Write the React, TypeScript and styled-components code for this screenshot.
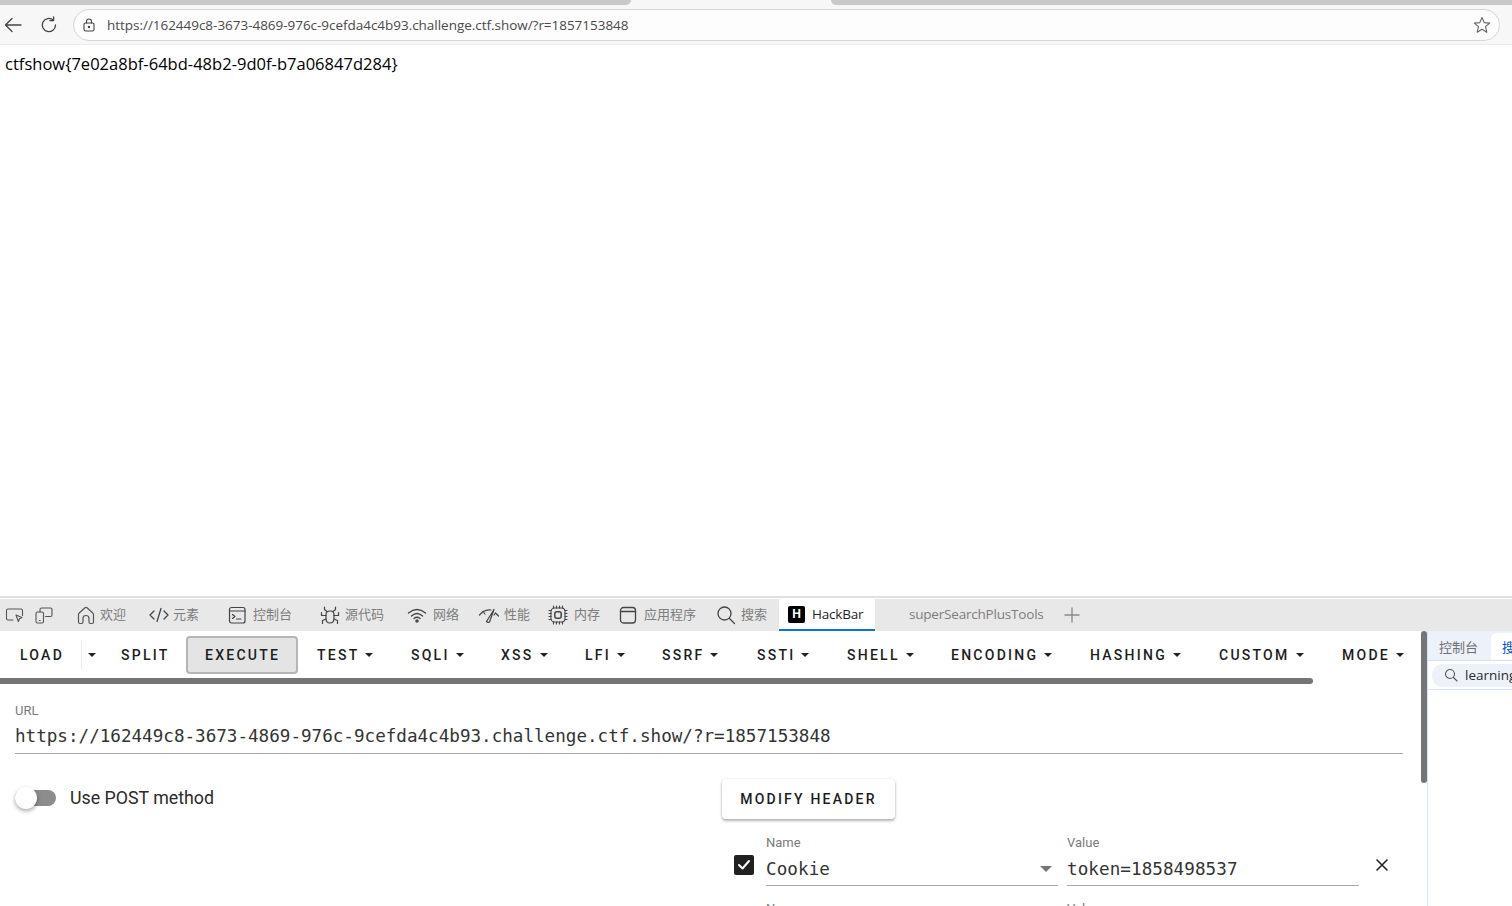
import React from 'react';
import styled, { createGlobalStyle } from 'styled-components';

const Global = createGlobalStyle`
  html, body {
    margin: 0;
    padding: 0;
    height: 100%;
    overflow: hidden;
    background: #fff;
  }
  * { box-sizing: border-box; }
`;

const CJK = `"Noto Sans CJK SC", sans-serif`;

const Page = styled.div`
  width: 1512px;
  height: 906px;
  display: flex;
  flex-direction: column;
  overflow: hidden;
  font-family: "Liberation Sans", ${CJK};
`;

/* browser chrome */
const Chrome = styled.div`
  height: 45px;
  flex: none;
  background: #f7f7f7;
  display: flex;
  flex-direction: column;
  border-bottom: 1px solid #ececec;
`;

const TabStrip = styled.div`
  height: 5px;
  flex: none;
  display: flex;
  background: #f7f7f7;
`;

const StripPiece = styled.div<{ $w: number; $left?: boolean }>`
  width: ${(p) => p.$w}px;
  flex: none;
  background: #c9c9c9;
  border-bottom-right-radius: ${(p) => (p.$left ? 6 : 0)}px;
  border-bottom-left-radius: ${(p) => (p.$left ? 0 : 6)}px;
`;

const StripGap = styled.div`
  width: 200px;
  flex: none;
`;

const NavRow = styled.div`
  flex: 1;
  display: flex;
  align-items: center;
  padding: 0 12px 0 0;
`;

const NavBtn = styled.div<{ $w: number; $mr: number }>`
  width: ${(p) => p.$w}px;
  margin-right: ${(p) => p.$mr}px;
  height: 32px;
  flex: none;
  display: flex;
  align-items: center;
  justify-content: center;
`;

const AddressBar = styled.div`
  flex: 1;
  height: 32px;
  border: 1px solid #d6d6d6;
  border-radius: 16px;
  background: #fdfdfd;
  display: flex;
  align-items: center;
  padding: 0 8px;
`;

const Url = styled.span`
  flex: 1;
  margin-left: 11px;
  font-family: "Open Sans", sans-serif;
  font-size: 13.5px;
  letter-spacing: -0.03px;
  color: #4a4a4a;
`;

const Body = styled.div`
  flex: 1;
  padding: 9px 5px;
  font-family: "Open Sans", sans-serif;
  font-size: 16.5px;
  letter-spacing: 0.02px;
  line-height: 20px;
  color: #000;
`;

/* devtools */
const Devtools = styled.div`
  height: 310px;
  flex: none;
  display: flex;
  flex-direction: column;
  border-top: 2px solid #e0e0e0;
`;

const DevTabs = styled.div`
  height: 32px;
  flex: none;
  margin-top: 1px;
  background: #e8e8e8;
  display: flex;
  align-items: stretch;
`;

const DevTab = styled.div<{ $w: number; $gap?: number; $pl?: number }>`
  width: ${(p) => p.$w}px;
  flex: none;
  display: flex;
  align-items: center;
  gap: ${(p) => p.$gap ?? 5}px;
  padding-left: ${(p) => p.$pl ?? 0}px;
  padding-bottom: 1px;
  font-family: ${CJK};
  font-size: 13px;
  color: #7d7d7d;
`;

const TabText = styled.span`
  position: relative;
  top: -1px;
`;

const ActiveTab = styled.div`
  width: 96px;
  flex: none;
  display: flex;
  align-items: center;
  gap: 7px;
  padding-left: 9px;
  background: #fff;
  border-radius: 2px 2px 0 0;
  border-bottom: 2px solid #0a76d0;
  font-family: "Open Sans", sans-serif;
  font-size: 13.5px;
  letter-spacing: -0.2px;
  color: #1f1f1f;
`;

const HackIcon = styled.span`
  width: 17px;
  height: 17px;
  flex: none;
  border-radius: 2px;
  background: #000;
  color: #fff;
  display: flex;
  align-items: center;
  justify-content: center;
  font-family: "Liberation Sans", sans-serif;
  font-size: 12px;
  font-weight: 700;
`;

const PlainTab = styled.div`
  margin-left: 34px;
  margin-right: 20px;
  padding-bottom: 2px;
  display: flex;
  align-items: center;
  font-family: "Open Sans", sans-serif;
  font-size: 13.5px;
  letter-spacing: -0.2px;
  color: #7d7d7d;
`;

const DevBody = styled.div`
  flex: 1;
  display: flex;
  min-height: 0;
`;

const HackBar = styled.div`
  width: 1427px;
  flex: none;
  display: flex;
  flex-direction: column;
  overflow: hidden;
  position: relative;
`;

const Toolbar = styled.div`
  height: 47px;
  flex: none;
  display: flex;
  align-items: center;
`;

const ToolBtn = styled.div<{ $w: number; $pad?: number }>`
  width: ${(p) => p.$w}px;
  height: 38px;
  flex: none;
  display: flex;
  align-items: center;
  justify-content: ${(p) => (p.$pad ? 'flex-start' : 'center')};
  padding-left: ${(p) => p.$pad ?? 0}px;
  gap: 6px;
  font-family: Roboto, sans-serif;
  font-size: 14px;
  font-weight: 500;
  letter-spacing: 2.25px;
  color: #1d1d1d;
`;

const ExecuteBtn = styled(ToolBtn)`
  border: 2px solid #b5b5b5;
  border-radius: 4px;
  background: #e4e4e4;
`;

const SplitDivider = styled.div`
  width: 1px;
  height: 28px;
  flex: none;
  background: #ececec;
`;

const Caret = styled.span<{ $size?: number; $c?: string }>`
  width: 0;
  height: 0;
  flex: none;
  border-left: ${(p) => p.$size ?? 4}px solid transparent;
  border-right: ${(p) => p.$size ?? 4}px solid transparent;
  border-top: ${(p) => p.$size ?? 4}px solid ${(p) => p.$c ?? '#222'};
`;

const HScroll = styled.div`
  height: 6px;
  width: 1313px;
  flex: none;
  background: #757575;
  border-radius: 0 3px 3px 0;
`;

const VScroll = styled.div`
  position: absolute;
  right: 0;
  top: 0;
  width: 6px;
  height: 152px;
  background: #757575;
  border-radius: 3px;
`;

const Form = styled.div`
  flex: 1;
  padding: 20px 24px 0 15px;
`;

const UrlLabel = styled.div`
  font-family: Roboto, sans-serif;
  font-size: 13px;
  line-height: 14px;
  color: #7b7b7b;
`;

const UrlValue = styled.div`
  height: 30px;
  margin-top: 6px;
  border-bottom: 1px solid #a8a8a8;
  font-family: "DejaVu Sans Mono", monospace;
  font-size: 17.6px;
  line-height: 24px;
  color: #333;
  white-space: nowrap;
`;

const Columns = styled.div`
  display: grid;
  grid-template-columns: 707px 1fr;
  margin-top: 25px;
`;

const SwitchRow = styled.div`
  display: flex;
  align-items: center;
  height: 40px;
  align-self: start;
`;

const Switch = styled.div`
  width: 41px;
  height: 16px;
  flex: none;
  position: relative;
  background: #8c8c8c;
  border-radius: 8px;
  margin-right: 14px;
  margin-bottom: 3px;
`;

const Knob = styled.span`
  position: absolute;
  left: 0;
  top: -3px;
  width: 22px;
  height: 22px;
  border-radius: 50%;
  background: #fff;
  box-shadow: 0 2px 4px rgba(0, 0, 0, 0.35);
`;

const SwitchLabel = styled.span`
  font-family: Roboto, sans-serif;
  font-size: 17.8px;
  color: #2b2b2b;
  margin-bottom: 4px;
`;

const HeaderCol = styled.div`
  display: flex;
  flex-direction: column;
`;

const ModifyBtn = styled.div`
  width: 173px;
  height: 40px;
  flex: none;
  border-radius: 4px;
  background: #fff;
  box-shadow: 0 2px 3px rgba(0, 0, 0, 0.28), 0 0 3px rgba(0, 0, 0, 0.1);
  display: flex;
  align-items: center;
  justify-content: center;
  font-family: Roboto, sans-serif;
  font-size: 14px;
  font-weight: 500;
  letter-spacing: 2.2px;
  color: #1d1d1d;
`;

const HeaderRow = styled.div<{ $mt: number }>`
  display: flex;
  flex: none;
  align-items: flex-start;
  margin-top: ${(p) => p.$mt}px;
  margin-left: 12px;
  height: 50px;
`;

const CheckCell = styled.div`
  width: 32px;
  flex: none;
  padding-top: 19px;
`;

const Check = styled.div`
  width: 20px;
  height: 20px;
  border-radius: 2px;
  background: #212121;
  display: flex;
  align-items: center;
  justify-content: center;
`;

const Field = styled.div<{ $w: number; $gap: number }>`
  width: ${(p) => p.$w}px;
  margin-right: ${(p) => p.$gap}px;
  flex: none;
`;

const FieldLabel = styled.div`
  font-family: Roboto, sans-serif;
  font-size: 13px;
  line-height: 14px;
  color: #7b7b7b;
`;

const FieldValue = styled.div`
  height: 32px;
  margin-top: 4px;
  border-bottom: 1px solid #a8a8a8;
  display: flex;
  align-items: center;
  justify-content: space-between;
  padding: 0 6px 1px 0;
  font-family: "DejaVu Sans Mono", monospace;
  font-size: 17.6px;
  letter-spacing: 0.07px;
  color: #333;
`;

const CloseCell = styled.div`
  width: 16px;
  flex: none;
  margin-top: 22px;
  display: flex;
`;

const Side = styled.div`
  flex: 1;
  border-left: 1px solid #d3e3fd;
  overflow: hidden;
`;

const SideTabs = styled.div`
  height: 30px;
  display: flex;
  background: #edf2fa;
  border-bottom: 1px solid #d3e3fd;
`;

const SideTab = styled.div<{ $on?: boolean }>`
  width: ${(p) => (p.$on ? 'auto' : '63px')};
  flex: ${(p) => (p.$on ? 1 : 'none')};
  display: flex;
  align-items: center;
  padding-left: 11px;
  padding-top: ${(p) => (p.$on ? 0 : 2)}px;
  margin-top: ${(p) => (p.$on ? 2 : 0)}px;
  background: ${(p) => (p.$on ? '#fff' : 'transparent')};
  border-radius: 6px 0 0 0;
  font-family: ${CJK};
  font-size: 13px;
  color: ${(p) => (p.$on ? '#0b57d0' : '#6f6f6f')};
  white-space: nowrap;
`;

const SearchRow = styled.div`
  height: 29px;
  padding: 3px 0 3px 4px;
  border-bottom: 1px solid #d3e3fd;
`;

const SearchPill = styled.div`
  height: 23px;
  background: #edf2fa;
  border-radius: 11px 0 0 11px;
  display: flex;
  align-items: center;
  gap: 7px;
  padding: 0 0 1px 12px;
  font-family: "Open Sans", sans-serif;
  font-size: 13.5px;
  color: #2b2b2b;
  white-space: nowrap;
`;

const I = styled.svg`
  flex: none;
  display: block;
  fill: none;
  stroke-linecap: round;
  stroke-linejoin: round;
`;

const tools: { label: string; w: number }[] = [
  { label: 'TEST', w: 94 },
  { label: 'SQLI', w: 90 },
  { label: 'XSS', w: 84 },
  { label: 'LFI', w: 77 },
  { label: 'SSRF', w: 95 },
  { label: 'SSTI', w: 90 },
  { label: 'SHELL', w: 104 },
  { label: 'ENCODING', w: 139 },
  { label: 'HASHING', w: 129 },
  { label: 'CUSTOM', w: 123 },
  { label: 'MODE', w: 100 },
];

export default function App() {
  return (
    <Page>
      <Global />
      <Chrome>
        <TabStrip>
          <StripPiece $w={631} $left />
          <StripGap />
          <StripPiece $w={681} />
        </TabStrip>
        <NavRow>
          <NavBtn $w={26} $mr={7}>
            <I width="18" height="16" viewBox="0 0 18 16" stroke="#444" strokeWidth="1.3">
              <path d="M17 8 H2 M8 1.5 L1.5 8 L8 14.5" />
            </I>
          </NavBtn>
          <NavBtn $w={32} $mr={8}>
            <I width="18" height="18" viewBox="0 0 18 18" stroke="#444" strokeWidth="1.3">
              <path d="M15.5 9 A6.6 6.6 0 1 1 13.2 4" />
              <path d="M13.6 0.8 V4.5 H9.9" />
            </I>
          </NavBtn>
          <AddressBar>
            <I width="14" height="14" viewBox="0 0 14 14" stroke="#444" strokeWidth="1.1">
              <rect x="2" y="5" width="10" height="8" rx="1.5" />
              <path d="M4.5 5 V3.5 A2.5 2.5 0 0 1 9.5 3.5 V5" />
              <circle cx="7" cy="9" r="0.7" fill="#444" />
            </I>
            <Url>https://162449c8-3673-4869-976c-9cefda4c4b93.challenge.ctf.show/?r=1857153848</Url>
            <I width="18" height="18" viewBox="0 0 18 18" stroke="#666" strokeWidth="1.1">
              <path d="M9 1.5 L11.2 6.6 L16.7 7.1 L12.5 10.7 L13.8 16.2 L9 13.3 L4.2 16.2 L5.5 10.7 L1.3 7.1 L6.8 6.6 Z" />
            </I>
          </AddressBar>
        </NavRow>
      </Chrome>
      <Body>ctfshow{'{'}7e02a8bf-64bd-48b2-9d0f-b7a06847d284{'}'}</Body>
      <Devtools>
        <DevTabs>
          <DevTab $w={34} $pl={5}>
            <I width="20" height="18" viewBox="0 0 20 18" stroke="#555" strokeWidth="1.1">
              <path d="M8 14 H3 Q1.5 14 1.5 12.5 V4.5 Q1.5 3 3 3 H16 Q17.5 3 17.5 4.5 V9.5" />
              <path d="M11 9 L17 11.5 L14.4 12.7 L13.4 15.5 Z" />
            </I>
          </DevTab>
          <DevTab $w={41}>
            <I width="20" height="18" viewBox="0 0 20 18" stroke="#555" strokeWidth="1.1">
              <rect x="2" y="6" width="7.5" height="11" rx="1.5" />
              <path d="M6 6 V3.5 Q6 2 7.5 2 H16.5 Q18 2 18 3.5 V9 Q18 10.5 16.5 10.5 H11.5" />
              <path d="M5.3 14.5 H6.2" />
            </I>
          </DevTab>
          <DevTab $w={73} $pl={1} $gap={4}>
            <I width="20" height="20" viewBox="0 0 20 20" stroke="#555" strokeWidth="1.2">
              <path d="M2.5 17 V9.5 Q2.5 8.6 3.2 8 L9 2.8 Q10 2 11 2.8 L16.8 8 Q17.5 8.6 17.5 9.5 V17 Q17.5 18.5 16 18.5 H14.5 Q13 18.5 13 17 V13.5 Q13 10.5 10 10.5 Q7 10.5 7 13.5 V17 Q7 18.5 5.5 18.5 H4 Q2.5 18.5 2.5 17 Z" />
            </I>
            <TabText>欢迎</TabText>
          </DevTab>
          <DevTab $w={80} $gap={3}>
            <I width="22" height="18" viewBox="0 0 22 18" stroke="#444" strokeWidth="1.3">
              <path d="M6 5 L2 9 L6 13 M16 5 L20 9 L16 13 M13 2.5 L9 15.5" />
            </I>
            <TabText>元素</TabText>
          </DevTab>
          <DevTab $w={92} $gap={7}>
            <I width="18" height="18" viewBox="0 0 18 18" stroke="#444" strokeWidth="1.2">
              <rect x="1.5" y="1.5" width="15.5" height="15.5" rx="2" />
              <path d="M1.5 5 H17 M4.5 8.5 L7 10.5 L4.5 12.5 M8.5 13 H13" />
            </I>
            <TabText>控制台</TabText>
          </DevTab>
          <DevTab $w={87}>
            <I width="20" height="20" viewBox="0 0 20 20" stroke="#444" strokeWidth="1.2">
              <path d="M6 9.5 Q6 6 10 6 Q14 6 14 9.5 V13.5 Q14 18 10 18 Q6 18 6 13.5 Z" />
              <path d="M7 6.5 L4.5 4.5 V2 M13 6.5 L15.5 4.5 V2 M6 10.5 H1.5 V7.5 M14 10.5 H18.5 V7.5 M6 14 L2.5 15.5 V18.5 M14 14 L17.5 15.5 V18.5" />
            </I>
            <TabText>源代码</TabText>
          </DevTab>
          <DevTab $w={71} $gap={6}>
            <I width="20" height="18" viewBox="0 0 20 18" stroke="#444" strokeWidth="1.3">
              <path d="M1.5 7 Q10 0 18.5 7 M4.5 10 Q10 5 15.5 10 M7 12.5 Q10 10 13 12.5" />
              <circle cx="10" cy="15" r="1.1" fill="#444" />
            </I>
            <TabText>网络</TabText>
          </DevTab>
          <DevTab $w={70} $gap={4}>
            <I width="22" height="16" viewBox="0 0 22 16" stroke="#444" strokeWidth="1.2">
              <path d="M1.5 8 L5 4.5 Q9 2.5 13 3 M5 4.5 L7 7 M17.5 6 L20.5 9 M17.5 6 L16 8" />
              <path d="M8.5 14.5 L16 2.5 L11.5 15 Q10 16 8.5 14.5 Z" />
            </I>
            <TabText>性能</TabText>
          </DevTab>
          <DevTab $w={71} $gap={6}>
            <I width="20" height="20" viewBox="0 0 20 20" stroke="#444" strokeWidth="1.1">
              <rect x="3" y="3" width="14" height="14" rx="3.5" />
              <rect x="6.8" y="6.8" width="6.4" height="6.4" rx="2" strokeWidth="1.5" />
              <path d="M5.5 1 V3 M8.5 1 V3 M11.5 1 V3 M14.5 1 V3 M5.5 17 V19 M8.5 17 V19 M11.5 17 V19 M14.5 17 V19 M1 5.5 H3 M1 8.5 H3 M1 11.5 H3 M1 14.5 H3 M17 5.5 H19 M17 8.5 H19 M17 11.5 H19 M17 14.5 H19" />
            </I>
            <TabText>内存</TabText>
          </DevTab>
          <DevTab $w={97} $gap={7}>
            <I width="18" height="18" viewBox="0 0 18 18" stroke="#444" strokeWidth="1.3">
              <rect x="1.5" y="1.5" width="15" height="15.5" rx="3" />
              <path d="M1.5 5.5 H16.5" />
            </I>
            <TabText>应用程序</TabText>
          </DevTab>
          <DevTab $w={63}>
            <I width="20" height="20" viewBox="0 0 20 20" stroke="#444" strokeWidth="1.3">
              <circle cx="8.5" cy="8.5" r="6.5" />
              <path d="M13.5 13.5 L18.5 18.5" />
            </I>
            <TabText>搜索</TabText>
          </DevTab>
          <ActiveTab>
            <HackIcon>H</HackIcon>
            HackBar
          </ActiveTab>
          <PlainTab>superSearchPlusTools</PlainTab>
          <DevTab $w={30}>
            <I width="16" height="16" viewBox="0 0 16 16" stroke="#888" strokeWidth="1.3">
              <path d="M8 1 V15 M1 8 H15" />
            </I>
          </DevTab>
        </DevTabs>
        <DevBody>
          <HackBar>
            <Toolbar>
              <ToolBtn $w={81} $pad={20}>LOAD</ToolBtn>
              <SplitDivider />
              <ToolBtn $w={20}>
                <Caret />
              </ToolBtn>
              <ToolBtn $w={84} $pad={19}>SPLIT</ToolBtn>
              <ExecuteBtn $w={112} $pad={17}>EXECUTE</ExecuteBtn>
              <ToolBtn $w={10} />
              {tools.map((t) => (
                <ToolBtn key={t.label} $w={t.w} $pad={9}>
                  {t.label}
                  <Caret />
                </ToolBtn>
              ))}
            </Toolbar>
            <HScroll />
            <Form>
              <UrlLabel>URL</UrlLabel>
              <UrlValue>https://162449c8-3673-4869-976c-9cefda4c4b93.challenge.ctf.show/?r=1857153848</UrlValue>
              <Columns>
                <SwitchRow>
                  <Switch>
                    <Knob />
                  </Switch>
                  <SwitchLabel>Use POST method</SwitchLabel>
                </SwitchRow>
                <HeaderCol>
                  <ModifyBtn>MODIFY HEADER</ModifyBtn>
                  <HeaderRow $mt={17}>
                    <CheckCell>
                      <Check>
                        <I width="14" height="14" viewBox="0 0 14 14" stroke="#fff" strokeWidth="2">
                          <path d="M2 7 L5.5 10.5 L12 3" />
                        </I>
                      </Check>
                    </CheckCell>
                    <Field $w={292} $gap={9}>
                      <FieldLabel>Name</FieldLabel>
                      <FieldValue>
                        Cookie
                        <Caret $size={6} $c="#757575" />
                      </FieldValue>
                    </Field>
                    <Field $w={292} $gap={16}>
                      <FieldLabel>Value</FieldLabel>
                      <FieldValue>token=1858498537</FieldValue>
                    </Field>
                    <CloseCell>
                      <I width="14" height="14" viewBox="0 0 14 14" stroke="#222" strokeWidth="1.6">
                        <path d="M2 2 L12 12 M12 2 L2 12" />
                      </I>
                    </CloseCell>
                  </HeaderRow>
                  <HeaderRow $mt={16}>
                    <CheckCell />
                    <Field $w={292} $gap={9}>
                      <FieldLabel>Name</FieldLabel>
                    </Field>
                    <Field $w={292} $gap={16}>
                      <FieldLabel>Value</FieldLabel>
                    </Field>
                  </HeaderRow>
                </HeaderCol>
              </Columns>
            </Form>
            <VScroll />
          </HackBar>
          <Side>
            <SideTabs>
              <SideTab>控制台</SideTab>
              <SideTab $on>搜索</SideTab>
            </SideTabs>
            <SearchRow>
              <SearchPill>
                <I width="14" height="14" viewBox="0 0 14 14" stroke="#555" strokeWidth="1.1">
                  <circle cx="6" cy="6" r="4.5" />
                  <path d="M9.5 9.5 L13 13" />
                </I>
                learning
              </SearchPill>
            </SearchRow>
          </Side>
        </DevBody>
      </Devtools>
    </Page>
  );
}
